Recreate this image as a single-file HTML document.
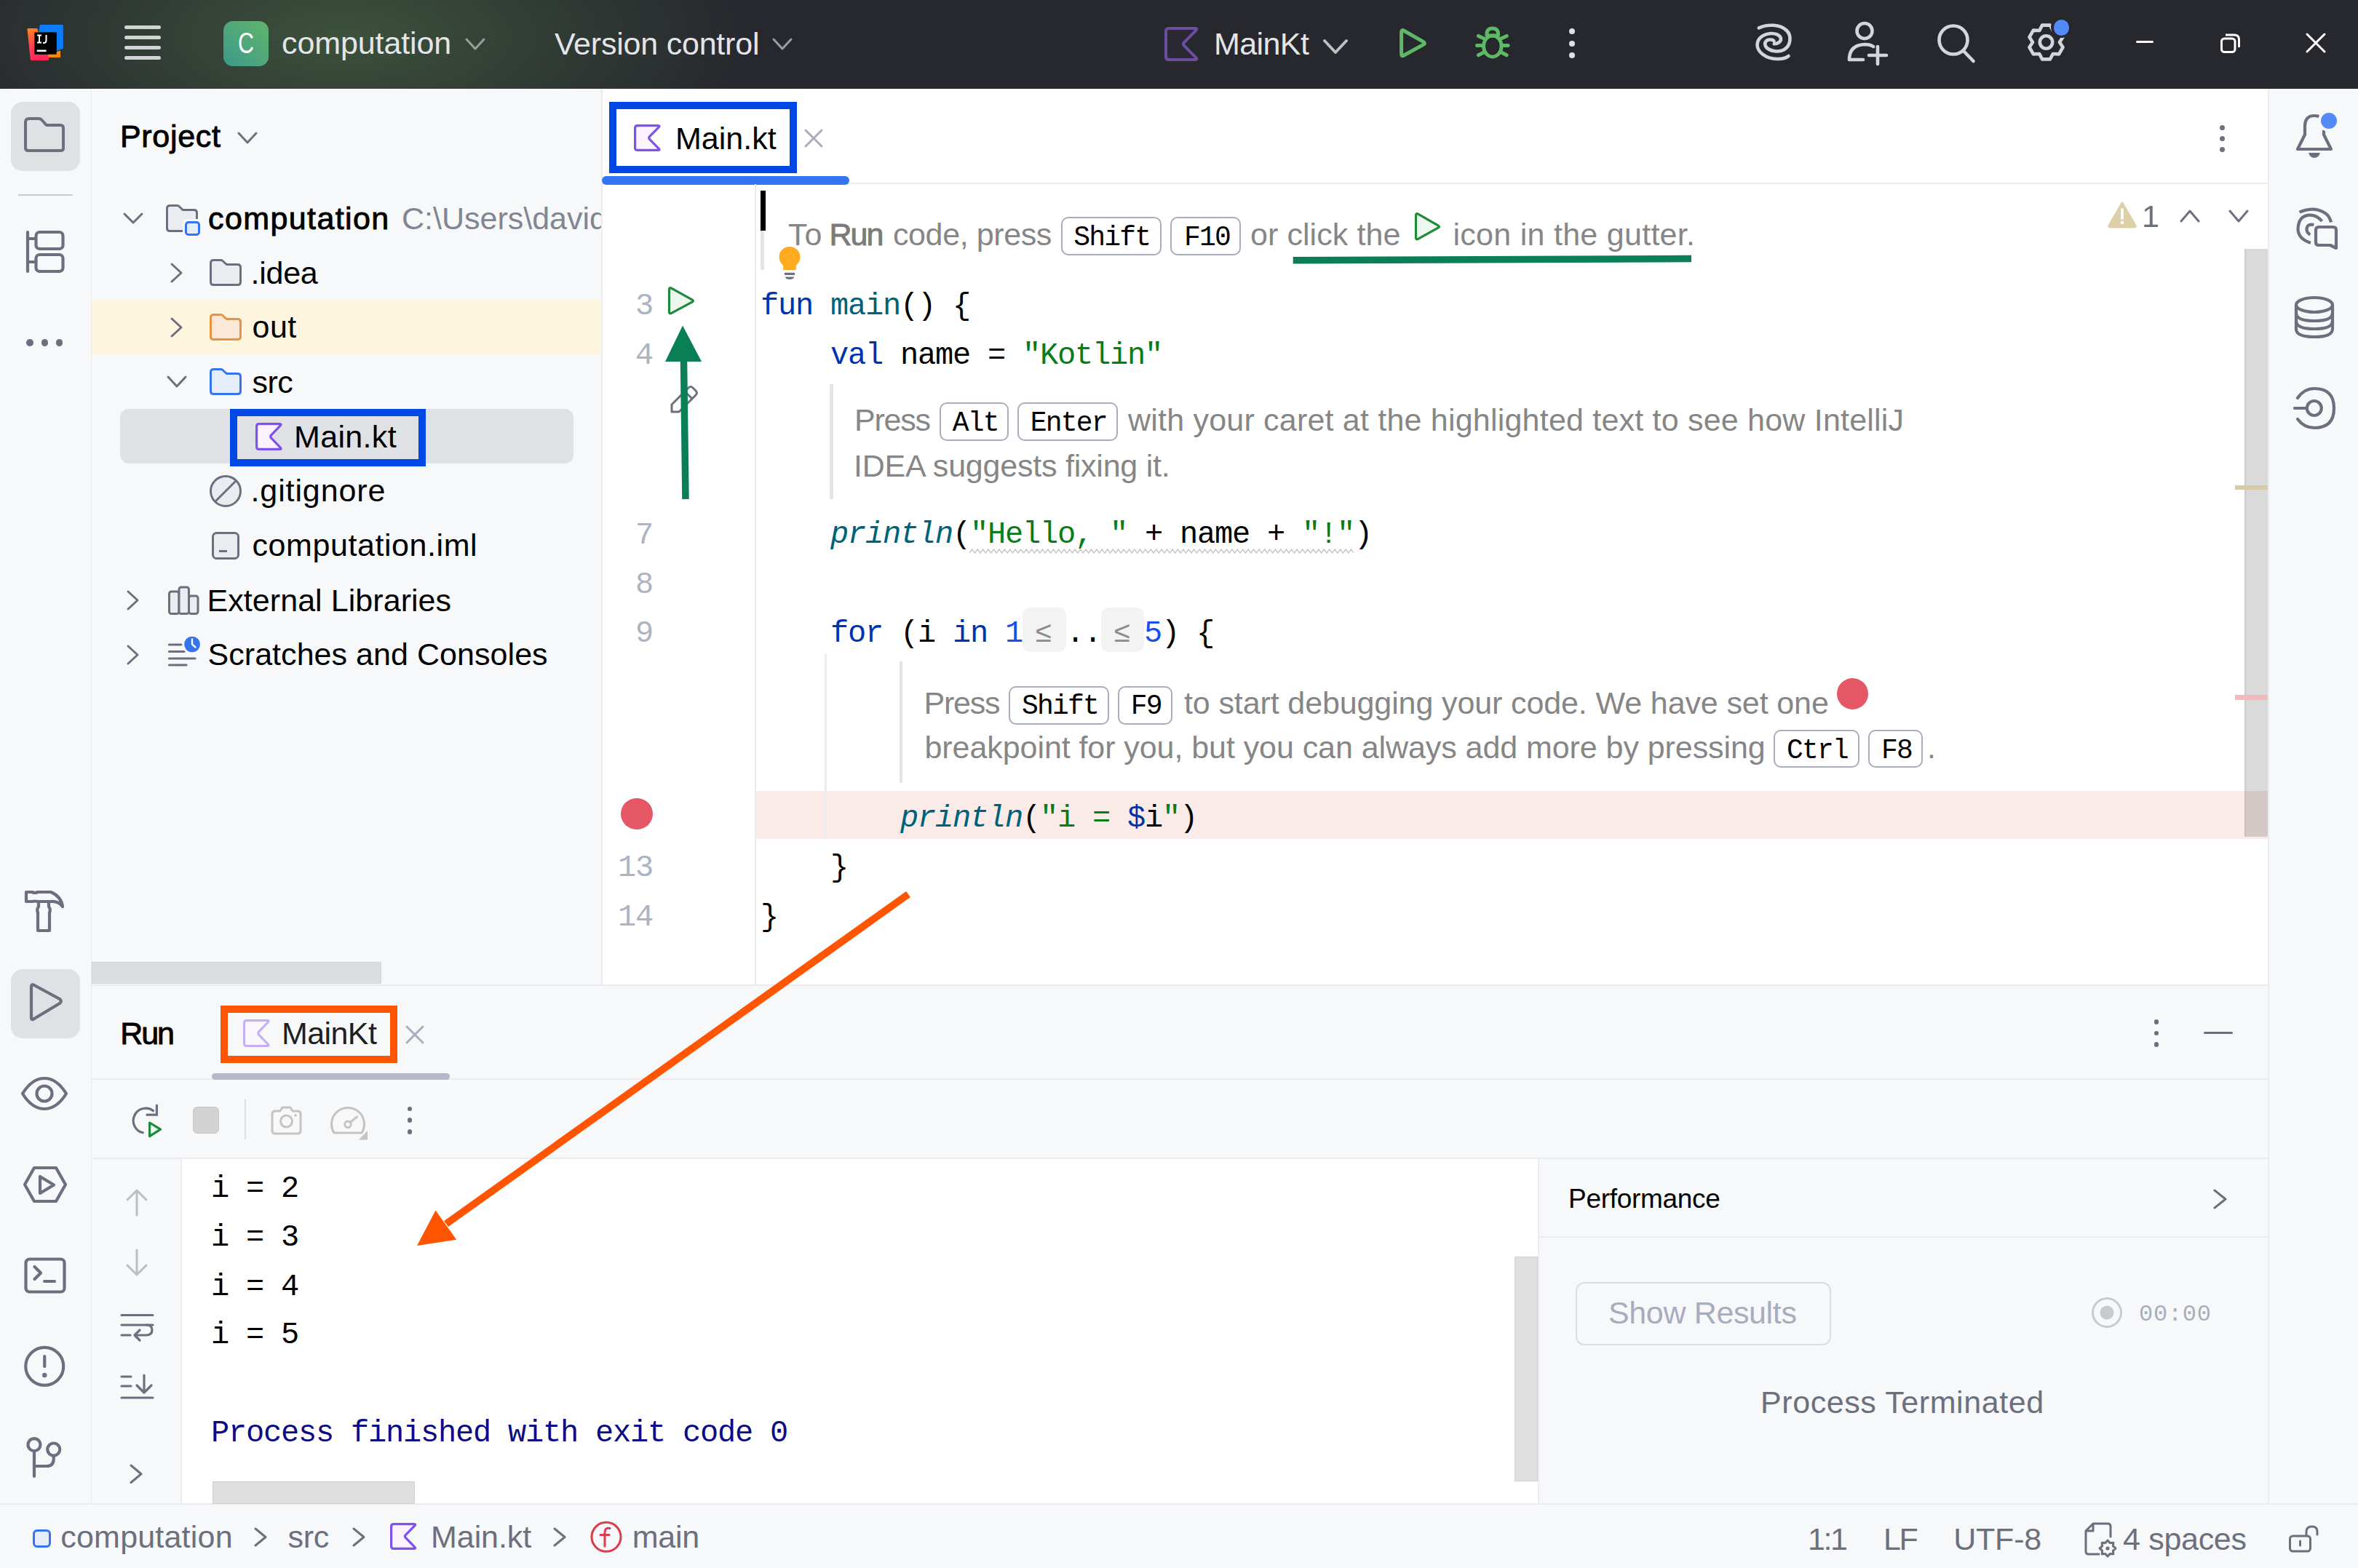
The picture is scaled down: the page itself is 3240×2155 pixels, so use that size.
<!DOCTYPE html><html><head><meta charset="utf-8"><title>IntelliJ IDEA</title><style>*{margin:0;padding:0}
html,body{width:3240px;height:2155px;overflow:hidden;background:#F7F8FA}
.a{position:absolute;white-space:pre;line-height:1}
.t{font-kerning:normal}
</style></head><body>
<div class="a" style="left:0px;top:0px;width:3240px;height:122px;background:#27282E;"></div>
<div class="a" style="left:0px;top:122px;width:126px;height:1945px;background:#F7F8FA;"></div>
<div class="a" style="left:125px;top:122px;width:1px;height:1945px;background:#EBECF0;"></div>
<div class="a" style="left:126px;top:122px;width:700px;height:1232px;background:#F7F8FA;"></div>
<div class="a" style="left:826px;top:122px;width:2px;height:1232px;background:#EBECF0;"></div>
<div class="a" style="left:828px;top:122px;width:2288px;height:1232px;background:#FFFFFF;"></div>
<div class="a" style="left:828px;top:251px;width:2288px;height:2px;background:#EBECF0;"></div>
<div class="a" style="left:3116px;top:122px;width:124px;height:1945px;background:#F7F8FA;"></div>
<div class="a" style="left:3116px;top:122px;width:2px;height:1945px;background:#EBECF0;"></div>
<div class="a" style="left:126px;top:1354px;width:2990px;height:713px;background:#F7F8FA;"></div>
<div class="a" style="left:126px;top:1353px;width:2990px;height:2px;background:#EBECF0;"></div>
<div class="a" style="left:126px;top:1482px;width:2990px;height:2px;background:#EBECF0;"></div>
<div class="a" style="left:126px;top:1591px;width:2990px;height:2px;background:#EBECF0;"></div>
<div class="a" style="left:250px;top:1593px;width:1864px;height:474px;background:#FFFFFF;"></div>
<div class="a" style="left:248px;top:1593px;width:2px;height:474px;background:#EBECF0;"></div>
<div class="a" style="left:2113px;top:1593px;width:2px;height:474px;background:#EBECF0;"></div>
<div class="a" style="left:2115px;top:1699px;width:1001px;height:2px;background:#EBECF0;"></div>
<div class="a" style="left:0px;top:2067px;width:3240px;height:88px;background:#F7F8FA;"></div>
<div class="a" style="left:0px;top:2066px;width:3240px;height:2px;background:#EBECF0;"></div>
<div class="a" style="left:0;top:0;width:1200px;height:122px;background:radial-gradient(ellipse 560px 230px at 470px 50px, rgba(90,140,80,0.42), rgba(90,140,80,0.18) 55%, rgba(39,40,46,0) 100%)"></div>
<svg class="a" style="left:30px;top:25px;" width="65" height="65" viewBox="0 0 65 65" fill="none">
<defs><linearGradient id="ijg" x1="0" y1="0" x2="0.3" y2="1"><stop offset="0" stop-color="#FF8A1E"/><stop offset="0.5" stop-color="#FF4550"/><stop offset="1" stop-color="#FE2857"/></linearGradient></defs>
<path d="M7.5 15 Q7.5 14 9 14 L21 14 L23 20 L23 50 L38 50 L37 57 Q36.5 58 35 58 L13 58 Q12 58 11.8 57 Z" fill="url(#ijg)"/>
<path d="M36 50 L53 44.5 L53 53 Q53 54 52 54 L37 54 Z" fill="#FF8A00"/>
<path d="M25 9 L55.8 9 Q56.8 9 56.8 10 L56.8 41.5 L48 45 L48 19.5 L23 19.5 Z" fill="#0A7DFF"/>
<rect x="17.4" y="19.5" width="30.3" height="30.2" fill="#000"/>
<path d="M21 23.5 L27 23.5 M24 23.5 L24 33.5 M21 33.5 L27 33.5" stroke="#fff" stroke-width="2"/>
<path d="M33.5 23 L33.5 30.5 Q33.5 34 30 34 L29 34" stroke="#fff" stroke-width="2" fill="none"/>
<rect x="20.7" y="43.5" width="12.9" height="2.6" fill="#fff"/>
</svg>
<div class="a" style="left:171px;top:34.5px;width:50px;height:5px;background:#D2D3D6;border-radius:2.5px;"></div>
<div class="a" style="left:171px;top:48.5px;width:50px;height:5px;background:#D2D3D6;border-radius:2.5px;"></div>
<div class="a" style="left:171px;top:62.5px;width:50px;height:5px;background:#D2D3D6;border-radius:2.5px;"></div>
<div class="a" style="left:171px;top:77.0px;width:50px;height:5px;background:#D2D3D6;border-radius:2.5px;"></div>
<div class="a" style="left:307px;top:29px;width:62px;height:62px;border-radius:13px;background:linear-gradient(225deg,#60B46A 0%,#4FA77A 50%,#3A9A8A 100%)"></div>
<div class="a" style="left:307px;width:62px;text-align:center;top:39.29px;font-family:'Liberation Sans', sans-serif;font-size:41px;color:#fff;transform:scaleX(0.74)">C</div>
<div class="a t" id="t1" style="left:387.00px;top:38.10px;font-family:'Liberation Sans', sans-serif;font-size:43px;color:#E4E5E8;letter-spacing:-0.100px;">computation</div>
<svg class="a" style="left:637px;top:50px;" width="32" height="21" viewBox="0 0 32 21" fill="none"><path d="M4 4 L16.0 17 L28 4" stroke="#9B9DA3" stroke-width="3" stroke-linecap="round" stroke-linejoin="round"/></svg>
<div class="a t" id="t2" style="left:762.00px;top:39.10px;font-family:'Liberation Sans', sans-serif;font-size:43px;color:#E4E5E8;letter-spacing:-0.214px;">Version control</div>
<svg class="a" style="left:1059px;top:50px;" width="32" height="21" viewBox="0 0 32 21" fill="none"><path d="M4 4 L16.0 17 L28 4" stroke="#9B9DA3" stroke-width="3" stroke-linecap="round" stroke-linejoin="round"/></svg>
<svg class="a" style="left:1600px;top:37px;" width="48" height="47" viewBox="0 0 48 47" fill="none"><path d="M6.00 2.00 L42.00 2.00 Q46.00 2.00 43.20 4.86 L27.20 21.21 Q24.96 23.50 27.20 25.79 L43.20 42.14 Q46.00 45.00 42.00 45.00 L6.00 45.00 Q2.00 45.00 2.00 41.00 L2.00 6.00 Q2.00 2.00 6.00 2.00 Z" stroke="#6B4F9E" fill="#2A2833" stroke-width="4" stroke-linejoin="round"/></svg>
<div class="a t" id="t3" style="left:1668.00px;top:38.60px;font-family:'Liberation Sans', sans-serif;font-size:43px;color:#E4E5E8;letter-spacing:-0.600px;">MainKt</div>
<svg class="a" style="left:1816px;top:52px;" width="38" height="24" viewBox="0 0 38 24" fill="none"><path d="M4 4 L19.0 20 L34 4" stroke="#BDBEC2" stroke-width="4" stroke-linecap="round" stroke-linejoin="round"/></svg>
<svg class="a" style="left:1910px;top:25px;" width="60" height="70" viewBox="0 0 60 70" fill="none"><path d="M19.08 17.28 L45.72 32.42 Q49.20 34.40 45.70 36.34 L19.10 51.06 Q15.60 53.00 15.60 49.00 L15.60 19.30 Q15.60 15.30 19.08 17.28 Z" stroke="#5FB865" stroke-width="5" stroke-linejoin="round"/></svg>
<svg class="a" style="left:2010px;top:25px;" width="80" height="70" viewBox="0 0 80 70" fill="none"><g stroke="#5FB865" stroke-width="5" stroke-linecap="round" fill="none">
<path d="M33 24 Q32 14 40.8 14 Q49.5 14 48.5 24 Z" stroke-linejoin="round"/>
<ellipse cx="40.8" cy="38.5" rx="12.2" ry="14.5"/>
<path d="M21.4 24.4 L29 28 M19.5 37.4 L27 37.4 M21.4 50.8 L28.5 47 M60.2 24.4 L52.6 28 M62.1 37.4 L54.6 37.4 M60.2 50.8 L53.1 47"/>
</g></svg>
<div class="a" style="left:2156px;top:38.5px;width:8px;height:8px;background:#DFE1E5;border-radius:4px;"></div>
<div class="a" style="left:2156px;top:55.5px;width:8px;height:8px;background:#DFE1E5;border-radius:4px;"></div>
<div class="a" style="left:2156px;top:72px;width:8px;height:8px;background:#DFE1E5;border-radius:4px;"></div>
<svg class="a" style="left:2400px;top:20px;" width="80" height="80" viewBox="0 0 80 80" fill="none"><g stroke="#D3D5DA" stroke-width="4.6" stroke-linecap="round" fill="none">
<path d="M16.8 18.4 C28 13, 46 13, 55 22 C62 29, 61 43, 51 48.5 C44 52, 33 51, 27 45 C23 40, 26 34, 33 34.5 C35.5 34.7, 37 35.5, 37.5 36.5"/>
<path d="M37.8 40.3 C43 40, 47.5 37, 47 33 C46 28, 39 25.5, 33 26 C22 27, 14.5 33, 14.5 42 C15 52, 27 60.5, 41 61 C48 61.3, 54 60, 57.5 57"/>
</g></svg>
<svg class="a" style="left:2536px;top:26px;" width="60" height="66" viewBox="0 0 60 66" fill="none"><g stroke="#D3D5DA" stroke-width="4.6" stroke-linecap="round" fill="none">
<circle cx="26" cy="16.5" r="10.5"/>
<path d="M5 56 Q5 36 26 35 Q34 35 38 38"/>
<path d="M5 56 L24 56"/>
<path d="M44 38 L44 62 M32 50 L56 50"/>
</g></svg>
<svg class="a" style="left:2656px;top:28px;" width="62" height="62" viewBox="0 0 62 62" fill="none"><g stroke="#D3D5DA" stroke-width="4.6" stroke-linecap="round" fill="none">
<circle cx="28" cy="27" r="19.5"/>
<path d="M42 42 L55.5 56"/>
</g></svg>
<svg class="a" style="left:2770px;top:20px;" width="80" height="80" viewBox="0 0 80 80" fill="none"><g stroke="#D3D5DA" stroke-width="4.6" stroke-linejoin="round" fill="none">
<path d="M36.1 14.6 L46.9 14.6 L50.8 22.0 L59.1 21.6 L64.5 31.0 L60.0 38.0 L64.5 45.0 L59.1 54.4 L50.8 54.0 L46.9 61.4 L36.1 61.4 L32.2 54.0 L23.9 54.4 L18.5 45.0 L23.0 38.0 L18.5 31.0 L23.9 21.6 L32.3 22.0 Z"/>
<circle cx="41.5" cy="38" r="8.7"/>
</g></svg>
<div class="a" style="left:2818.0px;top:23.4px;width:29px;height:29px;background:#27282E;border-radius:14.5px;"></div>
<div class="a" style="left:2821.8px;top:27.2px;width:21.4px;height:21.4px;background:#548AF7;border-radius:10.7px;"></div>
<div class="a" style="left:2935px;top:55.5px;width:24px;height:3px;background:#FFFFFF;border-radius:1.5px;"></div>
<svg class="a" style="left:3048px;top:43px;" width="34" height="34" viewBox="0 0 34 34" fill="none"><g stroke="#FFFFFF" stroke-width="3" fill="none">
<rect x="4.5" y="10" width="18.5" height="18.5" rx="4"/>
<path d="M10 5 L22 5 Q28.5 5 28.5 11.5 L28.5 22"/>
</g></svg>
<svg class="a" style="left:3166px;top:43px;" width="32" height="32" viewBox="0 0 32 32" fill="none"><path d="M4 4 L28 28 M28 4 L4 28" stroke="#FFFFFF" stroke-width="3" stroke-linecap="round"/></svg>
<div class="a" style="left:15px;top:139.5px;width:95px;height:95.0px;background:#DFE1E5;border-radius:16px;"></div>
<svg class="a" style="left:30px;top:158px;" width="62" height="54" viewBox="0 0 62 54" fill="none"><path d="M5 10 Q5 5 10 5 L23 5 Q25.5 5 27 6.5 L32 12 Q33 14 35.5 14 L53 14 Q57 14 57 18 L57 46 Q57 49 53 49 L9 49 Q5 49 5 45 Z" stroke="#6C707E" stroke-width="4" fill="none" stroke-linejoin="round"/></svg>
<div class="a" style="left:25px;top:266.5px;width:75px;height:2.0px;background:#C9CCD6;"></div>
<svg class="a" style="left:30px;top:312px;" width="62" height="68" viewBox="0 0 62 68" fill="none"><g stroke="#6C707E" stroke-width="4.2" fill="none" stroke-linecap="round" stroke-linejoin="round">
<path d="M8 7 L8 61"/>
<path d="M8 16 L19 16 M8 48 L19 48"/>
<rect x="19.5" y="7" width="37" height="23" rx="5"/>
<rect x="19.5" y="38" width="37" height="23" rx="5"/>
</g></svg>
<div class="a" style="left:36.0px;top:466.2px;width:9.6px;height:9.6px;background:#6C707E;border-radius:4.8px;"></div>
<div class="a" style="left:56.5px;top:466.2px;width:9.6px;height:9.6px;background:#6C707E;border-radius:4.8px;"></div>
<div class="a" style="left:76.60000000000001px;top:466.2px;width:9.6px;height:9.6px;background:#6C707E;border-radius:4.8px;"></div>
<svg class="a" style="left:30px;top:1220px;" width="62" height="66" viewBox="0 0 62 66" fill="none"><g stroke="#6C707E" stroke-width="4.2" fill="none" stroke-linejoin="round" stroke-linecap="round">
<path d="M6 6 L6 19 L14 19 Q18 18 22 19 L40 19 Q50 18 56 26 Q54 12 40 6 L22 6 Q18 8 14 6 Z"/>
<path d="M23 19 L23 26 Q20 30 22 34 L22 59 L38 59 L38 34 Q40 30 37 26 L37 19"/>
</g></svg>
<div class="a" style="left:15px;top:1332px;width:95px;height:95px;background:#DFE1E5;border-radius:16px;"></div>
<svg class="a" style="left:34px;top:1348px;" width="56" height="60" viewBox="0 0 56 60" fill="none"><path d="M9 8 Q9 4 13 6 L48 25 Q52 28 48 31 L13 52 Q9 55 9 50 Z" stroke="#6C707E" stroke-width="4.2" fill="none" stroke-linejoin="round"/></svg>
<svg class="a" style="left:26px;top:1476px;" width="70" height="56" viewBox="0 0 70 56" fill="none"><g stroke="#6C707E" stroke-width="4.2" fill="none">
<path d="M5 27 Q18 6 35 6 Q52 6 65 27 Q52 48 35 48 Q18 48 5 27 Z" stroke-linejoin="round"/>
<circle cx="35" cy="27" r="10.5"/>
</g></svg>
<svg class="a" style="left:28px;top:1598px;" width="68" height="60" viewBox="0 0 68 60" fill="none"><g stroke="#6C707E" stroke-width="4.2" fill="none" stroke-linejoin="round">
<path d="M6 30 L19 7 L49 7 L62 30 L49 53 L19 53 Z"/>
<path d="M27 19 L27 42 L46 30.5 Z"/>
</g></svg>
<svg class="a" style="left:30px;top:1725px;" width="64" height="56" viewBox="0 0 64 56" fill="none"><g stroke="#6C707E" stroke-width="4.2" fill="none" stroke-linecap="round" stroke-linejoin="round">
<rect x="5.5" y="5.5" width="53" height="45" rx="5"/>
<path d="M17.5 16 L26 24.5 L17.5 33"/>
<path d="M31 36 L45 36"/>
</g></svg>
<svg class="a" style="left:30px;top:1846px;" width="64" height="64" viewBox="0 0 64 64" fill="none"><g stroke="#6C707E" stroke-width="4.2" fill="none" stroke-linecap="round">
<circle cx="31.25" cy="31.8" r="26"/>
<path d="M31.25 18 L31.25 32"/>
</g><circle cx="31.25" cy="44" r="3.2" fill="#6C707E"/></svg>
<svg class="a" style="left:30px;top:1968px;" width="64" height="70" viewBox="0 0 64 70" fill="none"><g stroke="#6C707E" stroke-width="4.2" fill="none" stroke-linecap="round">
<circle cx="17" cy="17.6" r="8.5"/>
<circle cx="43.75" cy="24" r="8.5"/>
<path d="M17 26 L17 61"/>
<path d="M17 47 L34 47 Q43.75 47 43.75 37 L43.75 32.5"/>
</g></svg>
<svg class="a" style="left:3150px;top:150px;" width="64" height="72" viewBox="0 0 64 72" fill="none"><g stroke="#6C707E" stroke-width="4.2" fill="none" stroke-linecap="round" stroke-linejoin="round">
<path d="M40 12 Q36 9 30 9 Q17 9 17 24 L17 35 L7 55 L53 55 L43 35 L43 30"/>
</g><path d="M22 60 L38 60 Q36 67 30 67 Q24 67 22 60 Z" fill="#6C707E"/></svg>
<div class="a" style="left:3185px;top:150.5px;width:30px;height:30px;background:#F7F8FA;border-radius:15px;"></div>
<div class="a" style="left:3189px;top:154.5px;width:22px;height:22px;background:#548AF7;border-radius:11px;"></div>
<svg class="a" style="left:3140px;top:280px;" width="80" height="70" viewBox="0 0 80 70" fill="none"><g stroke="#6C707E" stroke-width="4.2" fill="none" stroke-linecap="butt" stroke-linejoin="round">
<path d="M19.6 11.6 Q40 3 55 13 Q61 17 63 25.6"/>
<path d="M50.5 24 Q43 15 33 15.6 Q18 16.5 17.5 35.4 Q18.5 49 35 53.7"/>
<path d="M39.3 29 Q30 27 29.5 35 Q29.5 40 34.4 42.5"/>
<path d="M46 32 L66 32 Q70 32 70 36 L70 61 L62 57 L46 57 Q42 57 42 53 L42 36 Q42 32 46 32 Z"/>
</g></svg>
<svg class="a" style="left:3150px;top:402px;" width="62" height="68" viewBox="0 0 62 68" fill="none"><g stroke="#6C707E" stroke-width="4.2" fill="none">
<ellipse cx="30" cy="17" rx="25" ry="10"/>
<path d="M5 17 L5 50 Q5 61 30 61 Q55 61 55 50 L55 17"/>
<path d="M5 28 Q5 39 30 39 Q55 39 55 28"/>
<path d="M5 39 Q5 50 30 50 Q55 50 55 39"/>
</g></svg>
<svg class="a" style="left:3146px;top:528px;" width="68" height="66" viewBox="0 0 68 66" fill="none"><g stroke="#6C707E" stroke-width="4.2" fill="none" stroke-linecap="round">
<path d="M11 19 Q20 6 34 6 Q61 6 61 33 Q61 60 34 60 Q20 60 11 48"/>
<circle cx="33.8" cy="33" r="10"/>
<path d="M7 33 L23.5 33"/>
</g></svg>
<div class="a t" id="t4" style="left:165.00px;top:165.60px;font-family:'Liberation Sans', sans-serif;font-size:43px;color:#000000;-webkit-text-stroke:0.9px currentColor;letter-spacing:0.667px;">Project</div>
<svg class="a" style="left:324px;top:179px;" width="32" height="21" viewBox="0 0 32 21" fill="none"><path d="M4 4 L16.0 17 L28 4" stroke="#6C707E" stroke-width="3" stroke-linecap="round" stroke-linejoin="round"/></svg>
<div class="a" style="left:126px;top:412px;width:700px;height:75px;background:#FEF5DF;"></div>
<div class="a" style="left:165px;top:562px;width:623px;height:75px;background:#DFE1E5;border-radius:12px;"></div>
<svg class="a" style="left:167px;top:290px;" width="32" height="20" viewBox="0 0 32 20" fill="none"><path d="M4 4 L16.0 16 L28 4" stroke="#6C707E" stroke-width="3" stroke-linecap="round" stroke-linejoin="round"/></svg>
<svg class="a" style="left:228px;top:281px;" width="44" height="38" viewBox="0 0 44 38" fill="none"><path d="M1.5 5.5 Q1.5 1.5 5.5 1.5 L15.84 1.5 Q17.6 1.5 18.919999999999998 3.5 L23.32 7.6000000000000005 L38.5 7.6000000000000005 Q42.5 7.6000000000000005 42.5 11.600000000000001 L42.5 32.5 Q42.5 36.5 38.5 36.5 L5.5 36.5 Q1.5 36.5 1.5 32.5 Z" stroke="#6C707E" fill="#EBECF0" stroke-width="3" stroke-linejoin="round"/></svg>
<div class="a" style="left:251px;top:301px;width:26px;height:25px;background:#F7F8FA;border-radius:6px;"></div>
<div class="a" style="left:254px;top:303.5px;width:20.5px;height:20.5px;background:#E6EEFD;border-radius:5px;box-sizing:border-box;border:3px solid #3574F0;"></div>
<div class="a t" id="t5" style="left:286.00px;top:278.60px;font-family:'Liberation Sans', sans-serif;font-size:43px;color:#000000;-webkit-text-stroke:0.9px currentColor;letter-spacing:1.400px;">computation</div>
<div class="a t" id="t6" style="left:552.00px;top:278.60px;font-family:'Liberation Sans', sans-serif;font-size:43px;color:#818594;width:274px;overflow:hidden;">C:\Users\david\IdeaProjects\computation</div>
<svg class="a" style="left:232px;top:359px;" width="21" height="32" viewBox="0 0 21 32" fill="none"><path d="M4 4 L17 16.0 L4 28" stroke="#6C707E" stroke-width="3" stroke-linecap="round" stroke-linejoin="round"/></svg>
<svg class="a" style="left:288px;top:356px;" width="44" height="37" viewBox="0 0 44 37" fill="none"><path d="M1.5 5.5 Q1.5 1.5 5.5 1.5 L15.84 1.5 Q17.6 1.5 18.919999999999998 3.5 L23.32 7.4 L38.5 7.4 Q42.5 7.4 42.5 11.4 L42.5 31.5 Q42.5 35.5 38.5 35.5 L5.5 35.5 Q1.5 35.5 1.5 31.5 Z" stroke="#6C707E" fill="#EBECF0" stroke-width="3" stroke-linejoin="round"/></svg>
<div class="a t" id="t7" style="left:344.50px;top:353.60px;font-family:'Liberation Sans', sans-serif;font-size:43px;color:#000000;letter-spacing:-0.250px;">.idea</div>
<svg class="a" style="left:232px;top:434px;" width="21" height="32" viewBox="0 0 21 32" fill="none"><path d="M4 4 L17 16.0 L4 28" stroke="#6C707E" stroke-width="3" stroke-linecap="round" stroke-linejoin="round"/></svg>
<svg class="a" style="left:288px;top:431px;" width="44" height="37" viewBox="0 0 44 37" fill="none"><path d="M1.5 5.5 Q1.5 1.5 5.5 1.5 L15.84 1.5 Q17.6 1.5 18.919999999999998 3.5 L23.32 7.4 L38.5 7.4 Q42.5 7.4 42.5 11.4 L42.5 31.5 Q42.5 35.5 38.5 35.5 L5.5 35.5 Q1.5 35.5 1.5 31.5 Z" stroke="#E99242" fill="#FCE8D6" stroke-width="3" stroke-linejoin="round"/></svg>
<div class="a t" id="t8" style="left:346.50px;top:427.60px;font-family:'Liberation Sans', sans-serif;font-size:43px;color:#000000;letter-spacing:0.500px;">out</div>
<svg class="a" style="left:227px;top:514px;" width="32" height="21" viewBox="0 0 32 21" fill="none"><path d="M4 4 L16.0 17 L28 4" stroke="#6C707E" stroke-width="3" stroke-linecap="round" stroke-linejoin="round"/></svg>
<svg class="a" style="left:288px;top:506px;" width="44" height="37" viewBox="0 0 44 37" fill="none"><path d="M1.5 5.5 Q1.5 1.5 5.5 1.5 L15.84 1.5 Q17.6 1.5 18.919999999999998 3.5 L23.32 7.4 L38.5 7.4 Q42.5 7.4 42.5 11.4 L42.5 31.5 Q42.5 35.5 38.5 35.5 L5.5 35.5 Q1.5 35.5 1.5 31.5 Z" stroke="#3574F0" fill="#E6EEFD" stroke-width="3" stroke-linejoin="round"/></svg>
<div class="a t" id="t9" style="left:346.50px;top:503.60px;font-family:'Liberation Sans', sans-serif;font-size:43px;color:#000000;letter-spacing:-0.500px;">src</div>
<svg class="a" style="left:351px;top:581px;" width="38" height="38" viewBox="0 0 38 38" fill="none"><path d="M4.80 1.60 L33.20 1.60 Q36.40 1.60 34.19 3.91 L21.53 17.15 Q19.76 19.00 21.53 20.85 L34.19 34.09 Q36.40 36.40 33.20 36.40 L4.80 36.40 Q1.60 36.40 1.60 33.20 L1.60 4.80 Q1.60 1.60 4.80 1.60 Z" stroke="#7F52E8" fill="#FBF3FF" stroke-width="3.2" stroke-linejoin="round"/></svg>
<div class="a t" id="t10" style="left:404.00px;top:578.60px;font-family:'Liberation Sans', sans-serif;font-size:43px;color:#000000;letter-spacing:0.333px;">Main.kt</div>
<svg class="a" style="left:286px;top:651px;" width="48" height="48" viewBox="0 0 48 48" fill="none"><circle cx="24" cy="24" r="20.5" stroke="#6C707E" stroke-width="3" fill="#EBECF0"/><path d="M10 38 L38 10" stroke="#6C707E" stroke-width="3"/></svg>
<div class="a t" id="t11" style="left:344.50px;top:652.60px;font-family:'Liberation Sans', sans-serif;font-size:43px;color:#000000;letter-spacing:0.888px;">.gitignore</div>
<svg class="a" style="left:290px;top:730px;" width="40" height="40" viewBox="0 0 40 40" fill="none"><rect x="2.5" y="2.5" width="35" height="35" rx="5" stroke="#6C707E" stroke-width="3" fill="#EBECF0"/><path d="M11 27.5 L22 27.5" stroke="#6C707E" stroke-width="3"/></svg>
<div class="a t" id="t12" style="left:346.50px;top:727.60px;font-family:'Liberation Sans', sans-serif;font-size:43px;color:#000000;letter-spacing:0.571px;">computation.iml</div>
<svg class="a" style="left:172px;top:809px;" width="21" height="32" viewBox="0 0 21 32" fill="none"><path d="M4 4 L17 16.0 L4 28" stroke="#6C707E" stroke-width="3" stroke-linecap="round" stroke-linejoin="round"/></svg>
<svg class="a" style="left:229px;top:804px;" width="46" height="42" viewBox="0 0 46 42" fill="none"><g stroke="#6C707E" stroke-width="3" fill="#EBECF0" stroke-linejoin="round">
<rect x="3.5" y="9" width="13.5" height="30.5" rx="3"/>
<rect x="17" y="3" width="13.5" height="36.5" rx="3"/>
<rect x="30.5" y="15" width="12.5" height="24.5" rx="3"/>
</g></svg>
<div class="a t" id="t13" style="left:284.50px;top:803.60px;font-family:'Liberation Sans', sans-serif;font-size:43px;color:#000000;letter-spacing:0.059px;">External Libraries</div>
<svg class="a" style="left:172px;top:884px;" width="21" height="32" viewBox="0 0 21 32" fill="none"><path d="M4 4 L17 16.0 L4 28" stroke="#6C707E" stroke-width="3" stroke-linecap="round" stroke-linejoin="round"/></svg>
<svg class="a" style="left:229px;top:872px;" width="52" height="48" viewBox="0 0 52 48" fill="none"><g stroke="#6C707E" stroke-width="3.2" stroke-linecap="round">
<path d="M3.5 14 L20 14 M3.5 23.5 L24 23.5 M3.5 33 L39 33 M3.5 42 L27 42"/>
</g>
<circle cx="35" cy="13.5" r="12.5" fill="#F7F8FA"/>
<circle cx="35" cy="13.5" r="10.8" fill="#3574F0"/>
<path d="M35 6.5 L35 13.5 L39.5 17.5" stroke="#fff" stroke-width="2.4" stroke-linecap="round" fill="none"/></svg>
<div class="a t" id="t14" style="left:285.50px;top:877.60px;font-family:'Liberation Sans', sans-serif;font-size:43px;color:#000000;letter-spacing:0.048px;">Scratches and Consoles</div>
<div class="a" style="left:126px;top:1322px;width:398px;height:30px;background:#DCDDE0;box-sizing:border-box;border:1px solid #D2D3D6;"></div>
<svg class="a" style="left:871px;top:171px;" width="38" height="37" viewBox="0 0 38 37" fill="none"><path d="M4.80 1.60 L33.20 1.60 Q36.40 1.60 34.15 3.88 L21.56 16.68 Q19.76 18.50 21.56 20.32 L34.15 33.12 Q36.40 35.40 33.20 35.40 L4.80 35.40 Q1.60 35.40 1.60 32.20 L1.60 4.80 Q1.60 1.60 4.80 1.60 Z" stroke="#7F52E8" fill="#FBF3FF" stroke-width="3.2" stroke-linejoin="round"/></svg>
<div class="a t" id="t15" style="left:928.00px;top:168.60px;font-family:'Liberation Sans', sans-serif;font-size:43px;color:#000000;">Main.kt</div>
<svg class="a" style="left:1103px;top:176px;" width="30" height="28" viewBox="0 0 30 28" fill="none"><path d="M4 3 L26 25 M26 3 L4 25" stroke="#A8ADBD" stroke-width="3" stroke-linecap="round"/></svg>
<div class="a" style="left:827px;top:242px;width:340px;height:12px;background:#3574F0;border-radius:6px;"></div>
<div class="a" style="left:3049.5px;top:171.5px;width:7px;height:7px;background:#6C707E;border-radius:3.5px;"></div>
<div class="a" style="left:3049.5px;top:186.5px;width:7px;height:7px;background:#6C707E;border-radius:3.5px;"></div>
<div class="a" style="left:3049.5px;top:201.5px;width:7px;height:7px;background:#6C707E;border-radius:3.5px;"></div>
<div class="a" style="left:1037px;top:253px;width:2px;height:1101px;background:#EBECF0;"></div>
<div class="a" style="left:873.00px;top:399.81px;font-family:'Liberation Mono', monospace;font-size:42px;letter-spacing:-1.2038px;color:#AEB3C2">3</div>
<div class="a" style="left:873.00px;top:467.81px;font-family:'Liberation Mono', monospace;font-size:42px;letter-spacing:-1.2038px;color:#AEB3C2">4</div>
<div class="a" style="left:873.00px;top:714.81px;font-family:'Liberation Mono', monospace;font-size:42px;letter-spacing:-1.2038px;color:#AEB3C2">7</div>
<div class="a" style="left:873.00px;top:782.81px;font-family:'Liberation Mono', monospace;font-size:42px;letter-spacing:-1.2038px;color:#AEB3C2">8</div>
<div class="a" style="left:873.00px;top:849.81px;font-family:'Liberation Mono', monospace;font-size:42px;letter-spacing:-1.2038px;color:#AEB3C2">9</div>
<div class="a" style="left:849.00px;top:1171.81px;font-family:'Liberation Mono', monospace;font-size:42px;letter-spacing:-1.2038px;color:#AEB3C2">13</div>
<div class="a" style="left:849.00px;top:1239.81px;font-family:'Liberation Mono', monospace;font-size:42px;letter-spacing:-1.2038px;color:#AEB3C2">14</div>
<div class="a" style="left:1045.00px;top:399.81px;font-family:'Liberation Mono', monospace;font-size:42px;letter-spacing:-1.2038px"><span style="color:#0033B3">fun</span><span style="color:#000000"> </span><span style="color:#00627A">main</span><span style="color:#000000">() {</span></div>
<div class="a" style="left:1141.00px;top:467.81px;font-family:'Liberation Mono', monospace;font-size:42px;letter-spacing:-1.2038px"><span style="color:#0033B3">val</span><span style="color:#000000"> name = </span><span style="color:#067D17">"Kotlin"</span></div>
<div class="a" style="left:1141.00px;top:713.81px;font-family:'Liberation Mono', monospace;font-size:42px;letter-spacing:-1.2038px"><span style="color:#00627A;font-style:italic">println</span><span style="color:#000000">(</span><span style="color:#067D17">"Hello, "</span><span style="color:#000000"> + name + </span><span style="color:#067D17">"!"</span><span style="color:#000000">)</span></div>
<svg class="a" style="left:1332px;top:753.5px;" width="528" height="9" viewBox="0 0 528 9" fill="none"><path d="M0 6 L3.72 1 L7.44 6 L11.16 1 L14.88 6 L18.60 1 L22.32 6 L26.04 1 L29.76 6 L33.48 1 L37.20 6 L40.92 1 L44.64 6 L48.36 1 L52.08 6 L55.80 1 L59.52 6 L63.24 1 L66.96 6 L70.68 1 L74.40 6 L78.12 1 L81.84 6 L85.56 1 L89.28 6 L93.00 1 L96.72 6 L100.44 1 L104.16 6 L107.88 1 L111.60 6 L115.32 1 L119.04 6 L122.76 1 L126.48 6 L130.20 1 L133.92 6 L137.64 1 L141.36 6 L145.08 1 L148.80 6 L152.52 1 L156.24 6 L159.96 1 L163.68 6 L167.40 1 L171.12 6 L174.84 1 L178.56 6 L182.28 1 L186.00 6 L189.72 1 L193.44 6 L197.16 1 L200.88 6 L204.60 1 L208.32 6 L212.04 1 L215.76 6 L219.48 1 L223.20 6 L226.92 1 L230.64 6 L234.36 1 L238.08 6 L241.80 1 L245.52 6 L249.24 1 L252.96 6 L256.68 1 L260.40 6 L264.12 1 L267.84 6 L271.56 1 L275.28 6 L279.00 1 L282.72 6 L286.44 1 L290.16 6 L293.88 1 L297.60 6 L301.32 1 L305.04 6 L308.76 1 L312.48 6 L316.20 1 L319.92 6 L323.64 1 L327.36 6 L331.08 1 L334.80 6 L338.52 1 L342.24 6 L345.96 1 L349.68 6 L353.40 1 L357.12 6 L360.84 1 L364.56 6 L368.28 1 L372.00 6 L375.72 1 L379.44 6 L383.16 1 L386.88 6 L390.60 1 L394.32 6 L398.04 1 L401.76 6 L405.48 1 L409.20 6 L412.92 1 L416.64 6 L420.36 1 L424.08 6 L427.80 1 L431.52 6 L435.24 1 L438.96 6 L442.68 1 L446.40 6 L450.12 1 L453.84 6 L457.56 1 L461.28 6 L465.00 1 L468.72 6 L472.44 1 L476.16 6 L479.88 1 L483.60 6 L487.32 1 L491.04 6 L494.76 1 L498.48 6 L502.20 1 L505.92 6 L509.64 1 L513.36 6 L517.08 1 L520.80 6 L524.52 1 L528.24 6" stroke="#C8C8C8" stroke-width="1.5" fill="none"/></svg>
<div class="a" style="left:1141.00px;top:849.81px;font-family:'Liberation Mono', monospace;font-size:42px;letter-spacing:-1.2038px"><span style="color:#0033B3">for</span><span style="color:#000000"> (i </span><span style="color:#0033B3">in</span><span style="color:#000000"> </span><span style="color:#1750EB">1</span></div>
<div class="a" style="left:1405px;top:835px;width:60px;height:61px;background:#F3F3F3;border-radius:10px;"></div>
<div class="a" style="left:1513px;top:835px;width:59px;height:61px;background:#F3F3F3;border-radius:10px;"></div>
<div class="a" style="left:1423px;top:848.14px;font-family:'Liberation Sans', sans-serif;font-size:40px;color:#8C8C8C">≤</div>
<div class="a" style="left:1531px;top:848.14px;font-family:'Liberation Sans', sans-serif;font-size:40px;color:#8C8C8C">≤</div>
<div class="a" style="left:1465px;top:849.81px;font-family:'Liberation Mono', monospace;font-size:42px;letter-spacing:-1.2038px;color:#000">..</div>
<div class="a" style="left:1572px;top:849.81px;font-family:'Liberation Mono', monospace;font-size:42px;letter-spacing:-1.2038px;color:#000"><span style="color:#1750EB">5</span>) {</div>
<div class="a" style="left:1039px;top:1087px;width:2077px;height:66px;background:#FAEBE9;"></div>
<div class="a" style="left:1237.00px;top:1103.81px;font-family:'Liberation Mono', monospace;font-size:42px;letter-spacing:-1.2038px"><span style="color:#00627A;font-style:italic">println</span><span style="color:#000000">(</span><span style="color:#067D17">"i = </span><span style="color:#0037A6">$</span><span style="color:#000000">i</span><span style="color:#067D17">"</span><span style="color:#000000">)</span></div>
<div class="a" style="left:1141.00px;top:1171.81px;font-family:'Liberation Mono', monospace;font-size:42px;letter-spacing:-1.2038px"><span style="color:#000000">}</span></div>
<div class="a" style="left:1045.00px;top:1239.81px;font-family:'Liberation Mono', monospace;font-size:42px;letter-spacing:-1.2038px"><span style="color:#000000">}</span></div>
<div class="a" style="left:1133px;top:899px;width:3px;height:254px;background:#EBECF0;"></div>
<svg class="a" style="left:910px;top:385px;" width="54" height="56" viewBox="0 0 54 56" fill="none"><path d="M12.57 11.19 L40.93 26.81 Q44.00 28.50 40.92 30.15 L12.58 45.35 Q9.50 47.00 9.50 43.50 L9.50 13.00 Q9.50 9.50 12.57 11.19 Z" stroke="#208A3C" stroke-width="3.2" fill="#EDF7EE" stroke-linejoin="round"/></svg>
<svg class="a" style="left:918px;top:526px;" width="46" height="45" viewBox="0 0 46 45" fill="none"><path d="M5 30 L28 7 Q31 4 34 7 L38 11 Q41 14 38 17 L15 40 L5 40 Z M23 12 L33 22" stroke="#6C707E" stroke-width="3" fill="none" stroke-linejoin="round"/></svg>
<div class="a" style="left:853.3px;top:1096.8999999999999px;width:43.4px;height:43.4px;background:#E55765;border-radius:21.7px;"></div>
<div class="a" style="left:1045px;top:317px;width:5px;height:54px;background:#E4E4E4;"></div>
<div class="a" style="left:1045px;top:262px;width:7px;height:55px;background:#000000;"></div>
<svg class="a" style="left:1065px;top:335px;" width="40" height="52" viewBox="0 0 40 52" fill="none"><circle cx="20" cy="18.3" r="14.4" fill="#FFAA1F"/><path d="M9 25 L31 25 L28.8 30 L28.8 36 L11.2 36 L11.2 30 Z" fill="#FFAA1F"/><rect x="13" y="39.8" width="14" height="3.2" fill="#6C707E"/><path d="M14 45.5 L26 45.5 Q25.5 49 20 49 Q14.5 49 14 45.5 Z" fill="#6C707E"/></svg>
<div class="a t" id="t16" style="left:1083.00px;top:300.60px;font-family:'Liberation Sans', sans-serif;font-size:43px;color:#868686;letter-spacing:1.000px;">To</div>
<div class="a t" id="t17" style="left:1139.50px;top:300.60px;font-family:'Liberation Sans', sans-serif;font-size:43px;color:#7B7B7B;-webkit-text-stroke:0.9px currentColor;letter-spacing:-2.000px;">Run</div>
<div class="a t" id="t18" style="left:1227.00px;top:300.60px;font-family:'Liberation Sans', sans-serif;font-size:43px;color:#868686;letter-spacing:-0.400px;">code, press</div>
<div class="a" style="left:1457.5px;top:298px;width:138.5px;height:53px;background:#FFFFFF;border-radius:10px;box-sizing:border-box;border:2.5px solid #A9ADBB;"></div>
<div class="a" style="left:1426.75px;width:200px;text-align:center;top:307.87px;font-family:'Liberation Mono', monospace;font-size:38px;letter-spacing:-1.803px;text-indent:1.803px;color:#000">Shift</div>
<div class="a" style="left:1608px;top:298px;width:97px;height:53px;background:#FFFFFF;border-radius:10px;box-sizing:border-box;border:2.5px solid #A9ADBB;"></div>
<div class="a" style="left:1557.50px;width:200px;text-align:center;top:307.87px;font-family:'Liberation Mono', monospace;font-size:38px;letter-spacing:-1.803px;text-indent:1.803px;color:#000">F10</div>
<div class="a t" id="t19" style="left:1718.00px;top:300.60px;font-family:'Liberation Sans', sans-serif;font-size:43px;color:#868686;letter-spacing:0.076px;">or click the</div>
<svg class="a" style="left:1935px;top:283px;" width="54" height="56" viewBox="0 0 54 56" fill="none"><path d="M13.54 11.23 L40.96 26.77 Q44.00 28.50 40.94 30.19 L13.56 45.31 Q10.50 47.00 10.50 43.50 L10.50 13.00 Q10.50 9.50 13.54 11.23 Z" stroke="#208A3C" stroke-width="3.2" fill="#EDF7EE" stroke-linejoin="round"/></svg>
<div class="a t" id="t20" style="left:1996.50px;top:300.60px;font-family:'Liberation Sans', sans-serif;font-size:43px;color:#868686;letter-spacing:0.277px;">icon in the gutter.</div>
<div class="a" style="left:1140px;top:527.5px;width:5px;height:158.5px;background:#E4E4E4;"></div>
<div class="a t" id="t21" style="left:1174.00px;top:556.10px;font-family:'Liberation Sans', sans-serif;font-size:43px;color:#868686;letter-spacing:-1.250px;">Press</div>
<div class="a" style="left:1290.5px;top:552.5px;width:95.5px;height:53.5px;background:#FFFFFF;border-radius:10px;box-sizing:border-box;border:2.5px solid #A9ADBB;"></div>
<div class="a" style="left:1239.25px;width:200px;text-align:center;top:563.37px;font-family:'Liberation Mono', monospace;font-size:38px;letter-spacing:-1.803px;text-indent:1.803px;color:#000">Alt</div>
<div class="a" style="left:1397.5px;top:552.5px;width:138.5px;height:53.5px;background:#FFFFFF;border-radius:10px;box-sizing:border-box;border:2.5px solid #A9ADBB;"></div>
<div class="a" style="left:1367.25px;width:200px;text-align:center;top:563.37px;font-family:'Liberation Mono', monospace;font-size:38px;letter-spacing:-1.803px;text-indent:1.803px;color:#000">Enter</div>
<div class="a t" id="t22" style="left:1550.00px;top:556.10px;font-family:'Liberation Sans', sans-serif;font-size:43px;color:#868686;letter-spacing:0.207px;">with your caret at the highlighted text to see how IntelliJ</div>
<div class="a t" id="t23" style="left:1173.00px;top:618.60px;font-family:'Liberation Sans', sans-serif;font-size:43px;color:#868686;letter-spacing:-0.217px;">IDEA suggests fixing it.</div>
<div class="a" style="left:1235.5px;top:909px;width:4.5px;height:167px;background:#E4E4E4;"></div>
<div class="a t" id="t24" style="left:1269.50px;top:945.10px;font-family:'Liberation Sans', sans-serif;font-size:43px;color:#868686;letter-spacing:-1.250px;">Press</div>
<div class="a" style="left:1385.5px;top:942.5px;width:138.5px;height:53.0px;background:#FFFFFF;border-radius:10px;box-sizing:border-box;border:2.5px solid #A9ADBB;"></div>
<div class="a" style="left:1355.50px;width:200px;text-align:center;top:952.37px;font-family:'Liberation Mono', monospace;font-size:38px;letter-spacing:-1.803px;text-indent:1.803px;color:#000">Shift</div>
<div class="a" style="left:1535.5px;top:942.5px;width:75.5px;height:53.0px;background:#FFFFFF;border-radius:10px;box-sizing:border-box;border:2.5px solid #A9ADBB;"></div>
<div class="a" style="left:1473.75px;width:200px;text-align:center;top:952.37px;font-family:'Liberation Mono', monospace;font-size:38px;letter-spacing:-1.803px;text-indent:1.803px;color:#000">F9</div>
<div class="a t" id="t25" style="left:1627.00px;top:945.10px;font-family:'Liberation Sans', sans-serif;font-size:43px;color:#868686;letter-spacing:-0.114px;">to start debugging your code. We have set one</div>
<div class="a" style="left:2523.8px;top:932.1px;width:43.2px;height:43.2px;background:#E55765;border-radius:21.6px;"></div>
<div class="a t" id="t26" style="left:1270.50px;top:1005.60px;font-family:'Liberation Sans', sans-serif;font-size:43px;color:#868686;letter-spacing:-0.069px;">breakpoint for you, but you can always add more by pressing</div>
<div class="a" style="left:2437px;top:1003px;width:117.5px;height:52px;background:#FFFFFF;border-radius:10px;box-sizing:border-box;border:2.5px solid #A9ADBB;"></div>
<div class="a" style="left:2396.00px;width:200px;text-align:center;top:1012.87px;font-family:'Liberation Mono', monospace;font-size:38px;letter-spacing:-1.803px;text-indent:1.803px;color:#000">Ctrl</div>
<div class="a" style="left:2566.5px;top:1003px;width:75.5px;height:52px;background:#FFFFFF;border-radius:10px;box-sizing:border-box;border:2.5px solid #A9ADBB;"></div>
<div class="a" style="left:2505.00px;width:200px;text-align:center;top:1012.87px;font-family:'Liberation Mono', monospace;font-size:38px;letter-spacing:-1.803px;text-indent:1.803px;color:#000">F8</div>
<div class="a t" id="t27" style="left:2648.00px;top:1005.60px;font-family:'Liberation Sans', sans-serif;font-size:43px;color:#868686;">.</div>
<svg class="a" style="left:2894px;top:275px;" width="44" height="40" viewBox="0 0 44 40" fill="none"><path d="M22 4 L40 35 Q41 37 38 37 L6 37 Q3 37 4 35 Z" fill="#DDD0A8" stroke="#DDD0A8" stroke-width="3" stroke-linejoin="round"/><path d="M22 13 L22 25" stroke="#fff" stroke-width="4" stroke-linecap="round"/><circle cx="22" cy="31" r="2.3" fill="#fff"/></svg>
<div class="a t" id="t28" style="left:2943.00px;top:275.60px;font-family:'Liberation Sans', sans-serif;font-size:43px;color:#6C707E;">1</div>
<svg class="a" style="left:2993px;top:286px;" width="32" height="22" viewBox="0 0 32 22" fill="none"><path d="M4 18 L16.0 4 L28 18" stroke="#6C707E" stroke-width="3" stroke-linecap="round" stroke-linejoin="round"/></svg>
<svg class="a" style="left:3060px;top:286px;" width="32" height="22" viewBox="0 0 32 22" fill="none"><path d="M4 4 L16.0 18 L28 4" stroke="#6C707E" stroke-width="3" stroke-linecap="round" stroke-linejoin="round"/></svg>
<div class="a" style="left:3084px;top:342px;width:32px;height:808px;background:rgba(0,0,0,0.145);"></div>
<div class="a" style="left:3084px;top:342px;width:1.5px;height:808px;background:rgba(0,0,0,0.05);"></div>
<div class="a" style="left:3071px;top:667px;width:45px;height:6px;background:#D6CBA6;"></div>
<div class="a" style="left:3071px;top:955px;width:45px;height:6.5px;background:#F4B9BD;"></div>
<div class="a t" id="t29" style="left:165.20px;top:1398.60px;font-family:'Liberation Sans', sans-serif;font-size:43px;color:#000000;-webkit-text-stroke:0.9px currentColor;letter-spacing:-2.100px;">Run</div>
<svg class="a" style="left:334px;top:1401px;" width="38" height="38" viewBox="0 0 38 38" fill="none"><path d="M4.70 1.50 L33.30 1.50 Q36.50 1.50 34.29 3.81 L21.53 17.15 Q19.76 19.00 21.53 20.85 L34.29 34.19 Q36.50 36.50 33.30 36.50 L4.70 36.50 Q1.50 36.50 1.50 33.30 L1.50 4.70 Q1.50 1.50 4.70 1.50 Z" stroke="#C5AEF8" fill="#FAF7FF" stroke-width="3" stroke-linejoin="round"/></svg>
<div class="a t" id="t30" style="left:387.00px;top:1398.60px;font-family:'Liberation Sans', sans-serif;font-size:43px;color:#1E1F22;letter-spacing:-0.600px;">MainKt</div>
<svg class="a" style="left:555px;top:1408px;" width="30" height="30" viewBox="0 0 30 30" fill="none"><path d="M4 3 L26 25 M26 3 L4 25" stroke="#A8ADBD" stroke-width="3" stroke-linecap="round"/></svg>
<div class="a" style="left:290.7px;top:1475px;width:327.3px;height:8.700000000000045px;background:#B4B8C8;border-radius:4.3px;"></div>
<div class="a" style="left:2959.8px;top:1401.3px;width:6.4px;height:6.4px;background:#6C707E;border-radius:3.2px;"></div>
<div class="a" style="left:2959.8px;top:1416.8px;width:6.4px;height:6.4px;background:#6C707E;border-radius:3.2px;"></div>
<div class="a" style="left:2959.8px;top:1432.3px;width:6.4px;height:6.4px;background:#6C707E;border-radius:3.2px;"></div>
<div class="a" style="left:3028px;top:1418px;width:40px;height:3px;background:#6C707E;border-radius:1.5px;"></div>
<svg class="a" style="left:170px;top:1505px;" width="60" height="70" viewBox="0 0 60 70" fill="none"><path d="M41.5 22.5 A17 17 0 1 0 27.6 52" stroke="#6C707E" stroke-width="3.2" fill="none"/>
<path d="M32 27.2 L45.4 27.2 L45.4 14" stroke="#6C707E" stroke-width="3.2" fill="none" stroke-linecap="round"/>
<path d="M35.6 38 L50.5 47.2 L35.6 56.7 Z" stroke="#208A3C" stroke-width="3.2" fill="#F0FAF0" stroke-linejoin="round"/></svg>
<div class="a" style="left:264.8px;top:1521px;width:36.599999999999966px;height:37px;background:#D3D3D3;border-radius:6px;box-sizing:border-box;border:1.5px solid #C8C8C8;"></div>
<div class="a" style="left:335.5px;top:1510.5px;width:2.5px;height:55.5px;background:#DCDDE0;"></div>
<svg class="a" style="left:368px;top:1517px;" width="50" height="45" viewBox="0 0 50 45" fill="none"><g stroke="#C4C4C4" stroke-width="3" fill="none" stroke-linejoin="round">
<path d="M6 14 Q6 10 10 10 L17 10 L20 5 L31 5 L34 10 L41 10 Q45 10 45 14 L45 37 Q45 41 41 41 L10 41 Q6 41 6 37 Z"/>
<circle cx="25.5" cy="24" r="8"/>
</g><circle cx="38" cy="16" r="1.8" fill="#C4C4C4"/></svg>
<svg class="a" style="left:451px;top:1515px;" width="58" height="56" viewBox="0 0 58 56" fill="none"><g stroke="#C4C4C4" stroke-width="3" fill="none" stroke-linecap="round" stroke-linejoin="round">
<path d="M8 42 A22.5 22.5 0 1 1 46 42 Z"/>
<circle cx="27" cy="30.3" r="4.3"/>
<path d="M30.3 27.3 L39.6 20"/>
</g><path d="M54 39 L54 51.6 L42 51.6 Z" fill="#C4C4C4"/></svg>
<div class="a" style="left:559.5px;top:1520.7px;width:6.6px;height:6.6px;background:#6C707E;border-radius:3.3px;"></div>
<div class="a" style="left:559.5px;top:1536.4px;width:6.6px;height:6.6px;background:#6C707E;border-radius:3.3px;"></div>
<div class="a" style="left:559.5px;top:1552.0px;width:6.6px;height:6.6px;background:#6C707E;border-radius:3.3px;"></div>
<svg class="a" style="left:170px;top:1630px;" width="36" height="44" viewBox="0 0 36 44" fill="none"><path d="M18 6 L18 40 M5 19 L18 6 L31 19" stroke="#BDBEC2" stroke-width="3" fill="none" stroke-linecap="round" stroke-linejoin="round"/></svg>
<svg class="a" style="left:170px;top:1715px;" width="36" height="44" viewBox="0 0 36 44" fill="none"><path d="M18 3 L18 37 M5 24 L18 37 L31 24" stroke="#BDBEC2" stroke-width="3" fill="none" stroke-linecap="round" stroke-linejoin="round"/></svg>
<svg class="a" style="left:162px;top:1802px;" width="52" height="46" viewBox="0 0 52 46" fill="none"><g stroke="#6C707E" stroke-width="3.2" fill="none" stroke-linecap="round" stroke-linejoin="round">
<path d="M5 5.5 L48 5.5 M5 19 L48 19 M5 33 L17 33"/>
<path d="M30 40 L23 33 L30 26"/>
<path d="M24 33 L39 33 Q47 33 47 26 Q47 19 39 19"/>
</g></svg>
<svg class="a" style="left:162px;top:1887px;" width="52" height="40" viewBox="0 0 52 40" fill="none"><g stroke="#6C707E" stroke-width="3.2" fill="none" stroke-linecap="round" stroke-linejoin="round">
<path d="M5 5 L18 5 M5 18 L18 18 M5 34 L48 34"/>
<path d="M36 3 L36 27 M26 17 L36 27 L46 17"/>
</g></svg>
<svg class="a" style="left:176px;top:2009.5px;" width="22" height="31.5" viewBox="0 0 22 31.5" fill="none"><path d="M4 4 L18 15.75 L4 27.5" stroke="#6C707E" stroke-width="3" stroke-linecap="round" stroke-linejoin="round"/></svg>
<div class="a" style="left:290px;top:1612.81px;font-family:'Liberation Mono', monospace;font-size:42px;letter-spacing:-1.2038px"><span style="color:#000">i = 2</span></div>
<div class="a" style="left:290px;top:1679.81px;font-family:'Liberation Mono', monospace;font-size:42px;letter-spacing:-1.2038px"><span style="color:#000">i = 3</span></div>
<div class="a" style="left:290px;top:1747.81px;font-family:'Liberation Mono', monospace;font-size:42px;letter-spacing:-1.2038px"><span style="color:#000">i = 4</span></div>
<div class="a" style="left:290px;top:1814.31px;font-family:'Liberation Mono', monospace;font-size:42px;letter-spacing:-1.2038px"><span style="color:#000">i = 5</span></div>
<div class="a" style="left:290px;top:1948.81px;font-family:'Liberation Mono', monospace;font-size:42px;letter-spacing:-1.2038px"><span style="color:#0B0B88">Process finished with exit code 0</span></div>
<div class="a" style="left:292px;top:2035.5px;width:278px;height:31.5px;background:#DFDFDF;box-sizing:border-box;border:1.5px solid #D0D0D0;"></div>
<div class="a" style="left:2081px;top:1727px;width:32px;height:309px;background:#E0E0E0;box-sizing:border-box;border:1.5px solid #D2D2D2;"></div>
<div class="a t" id="t31" style="left:2155.00px;top:1628.68px;font-family:'Liberation Sans', sans-serif;font-size:37px;color:#000000;letter-spacing:-0.300px;">Performance</div>
<svg class="a" style="left:3039px;top:1632px;" width="23" height="32" viewBox="0 0 23 32" fill="none"><path d="M4 4 L19 16.0 L4 28" stroke="#6C707E" stroke-width="3" stroke-linecap="round" stroke-linejoin="round"/></svg>
<div class="a" style="left:2165px;top:1762px;width:351px;height:87px;border-radius:12px;box-sizing:border-box;border:2.5px solid #DCDDE1;"></div>
<div class="a t" id="t32" style="left:2210.00px;top:1783.10px;font-family:'Liberation Sans', sans-serif;font-size:43px;color:#A8ADBD;letter-spacing:-0.364px;">Show Results</div>
<svg class="a" style="left:2872px;top:1781px;" width="46" height="46" viewBox="0 0 46 46" fill="none"><circle cx="23" cy="23" r="19.5" stroke="#C9CACD" stroke-width="3" fill="none"/><circle cx="23" cy="23" r="9.5" fill="#C9CACD"/></svg>
<div class="a t" id="t33" style="left:2939.00px;top:1791.47px;font-family:'Liberation Mono', monospace;font-size:32px;color:#A8ADBD;letter-spacing:0.750px;">00:00</div>
<div class="a t" id="t34" style="left:2419.00px;top:1905.60px;font-family:'Liberation Sans', sans-serif;font-size:43px;color:#6C707E;letter-spacing:0.588px;">Process Terminated</div>
<div class="a" style="left:45px;top:2102.3px;width:24.8px;height:24.5px;background:#E6EEFD;border-radius:6px;box-sizing:border-box;border:3px solid #3574F0;"></div>
<div class="a t" id="t35" style="left:83.30px;top:2090.60px;font-family:'Liberation Sans', sans-serif;font-size:43px;color:#6C707E;letter-spacing:0.200px;">computation</div>
<svg class="a" style="left:347px;top:2097px;" width="22" height="31" viewBox="0 0 22 31" fill="none"><path d="M4 4 L18 15.5 L4 27" stroke="#6C707E" stroke-width="3" stroke-linecap="round" stroke-linejoin="round"/></svg>
<div class="a t" id="t36" style="left:395.40px;top:2090.60px;font-family:'Liberation Sans', sans-serif;font-size:43px;color:#6C707E;letter-spacing:-0.200px;">src</div>
<svg class="a" style="left:482px;top:2097px;" width="22" height="31" viewBox="0 0 22 31" fill="none"><path d="M4 4 L18 15.5 L4 27" stroke="#6C707E" stroke-width="3" stroke-linecap="round" stroke-linejoin="round"/></svg>
<svg class="a" style="left:536.4px;top:2093.4px;" width="37.60000000000002" height="37.0" viewBox="0 0 37.60000000000002 37.0" fill="none"><path d="M4.80 1.60 L32.80 1.60 Q36.00 1.60 33.77 3.89 L21.34 16.67 Q19.55 18.50 21.34 20.33 L33.77 33.11 Q36.00 35.40 32.80 35.40 L4.80 35.40 Q1.60 35.40 1.60 32.20 L1.60 4.80 Q1.60 1.60 4.80 1.60 Z" stroke="#7F52E8" fill="#FBF3FF" stroke-width="3.2" stroke-linejoin="round"/></svg>
<div class="a t" id="t37" style="left:592.10px;top:2090.60px;font-family:'Liberation Sans', sans-serif;font-size:43px;color:#6C707E;letter-spacing:-0.101px;">Main.kt</div>
<svg class="a" style="left:758px;top:2097px;" width="22" height="31" viewBox="0 0 22 31" fill="none"><path d="M4 4 L18 15.5 L4 27" stroke="#6C707E" stroke-width="3" stroke-linecap="round" stroke-linejoin="round"/></svg>
<svg class="a" style="left:809px;top:2088px;" width="48" height="48" viewBox="0 0 48 48" fill="none"><circle cx="24" cy="24.3" r="20" stroke="#DB3B4B" stroke-width="3" fill="none"/><path d="M29 12.5 Q22 11 22 18 L22 37 M16 21.5 L28 21.5" stroke="#DB3B4B" stroke-width="3" fill="none" stroke-linecap="round"/></svg>
<div class="a t" id="t38" style="left:868.70px;top:2090.60px;font-family:'Liberation Sans', sans-serif;font-size:43px;color:#6C707E;letter-spacing:-0.267px;">main</div>
<div class="a t" id="t39" style="left:2484.10px;top:2093.90px;font-family:'Liberation Sans', sans-serif;font-size:43px;color:#6C707E;letter-spacing:-2.500px;">1:1</div>
<div class="a t" id="t40" style="left:2588.05px;top:2093.90px;font-family:'Liberation Sans', sans-serif;font-size:43px;color:#6C707E;letter-spacing:-2.500px;">LF</div>
<div class="a t" id="t41" style="left:2684.30px;top:2093.90px;font-family:'Liberation Sans', sans-serif;font-size:43px;color:#6C707E;letter-spacing:-0.250px;">UTF-8</div>
<svg class="a" style="left:2862px;top:2090px;" width="48" height="52" viewBox="0 0 48 52" fill="none"><path d="M22 46 L8 46 Q4 46 4 42 L4 14 L14 4 L34 4 Q38 4 38 8 L38 22" stroke="#6C707E" stroke-width="3" fill="none" stroke-linejoin="round" stroke-linecap="round"/>
<path d="M4 14 L14 14 L14 4" stroke="#6C707E" stroke-width="3" fill="none" stroke-linejoin="round"/></svg>
<svg class="a" style="left:2862px;top:2090px;" width="48" height="52" viewBox="0 0 48 52" fill="none"><path d="M45.0 38.0 L41.4 41.1 L41.8 45.8 L37.1 45.4 L34.0 49.0 L30.9 45.4 L26.2 45.8 L26.6 41.1 L23.0 38.0 L26.6 34.9 L26.2 30.2 L30.9 30.6 L34.0 27.0 L37.1 30.6 L41.8 30.2 L41.4 34.9 Z" stroke="#6C707E" stroke-width="3" fill="#F7F8FA" stroke-linejoin="round"/><circle cx="34" cy="38" r="2.6" fill="#6C707E"/></svg>
<div class="a t" id="t42" style="left:2917.00px;top:2093.90px;font-family:'Liberation Sans', sans-serif;font-size:43px;color:#6C707E;letter-spacing:-0.313px;">4 spaces</div>
<svg class="a" style="left:3142px;top:2094px;" width="48" height="42" viewBox="0 0 48 42" fill="none"><g stroke="#6C707E" stroke-width="3" fill="none" stroke-linecap="round" stroke-linejoin="round">
<rect x="4.5" y="17" width="28" height="21" rx="4"/>
<path d="M27 17 L27 11 Q27 4 35 4 Q42 4 42 11 L42 15"/>
<path d="M18.5 24 L18.5 30"/>
</g></svg>
<div class="a" style="left:837px;top:139.5px;width:257.5px;height:98.0px;box-sizing:border-box;border:10px solid #0048E6;"></div>
<div class="a" style="left:316px;top:562px;width:269px;height:78.70000000000005px;box-sizing:border-box;border:10px solid #0048E6;"></div>
<div class="a" style="left:303.4px;top:1382px;width:242.60000000000002px;height:79.29999999999995px;box-sizing:border-box;border:10px solid #FF5500;"></div>
<svg class="a" style="left:1770px;top:345px;" width="560" height="24" viewBox="0 0 560 24" fill="none"><path d="M6.7 12.8 L554 10.5" stroke="#0A7F55" stroke-width="9.5"/></svg>
<svg class="a" style="left:900px;top:440px;" width="80" height="260" viewBox="0 0 80 260" fill="none"><path d="M39.5 57 L42 246" stroke="#0A7F55" stroke-width="9.5"/><path d="M38 7.5 L14 57 L64 57 Z" fill="#0A7F55"/></svg>
<svg class="a" style="left:550px;top:1200px;" width="720" height="530" viewBox="0 0 720 530" fill="none"><path d="M698 29 L63 482" stroke="#FF5500" stroke-width="10"/><path d="M23 512 L48.5 463.5 L77.2 503.7 Z" fill="#FF5500"/></svg>
</body></html>
